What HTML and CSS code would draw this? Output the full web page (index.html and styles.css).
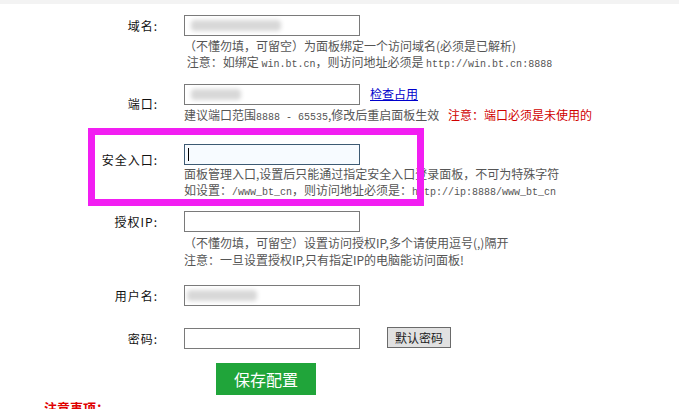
FILE: index.html
```html
<!DOCTYPE html>
<html lang="zh-CN">
<head>
<meta charset="utf-8">
<title>面板设置</title>
<link rel="stylesheet" href="styles.css">
</head>
<body>
<div class="topbar"></div>
<div class="form">
  <div class="row r1">
    <div class="label">域名:</div>
    <div class="field">
      <div class="line">
        <div class="input"><span class="blur b1"></span></div>
      </div>
      <div class="hint h1a">（不懂勿填，可留空）为面板绑定一个访问域名(必须是已解析)</div>
      <div class="hint">&nbsp;注意：如绑定 <span class="mono">win.bt.cn</span>，则访问地址必须是 <span class="mono">http://win.bt.cn:8888</span></div>
    </div>
  </div>

  <div class="row r2">
    <div class="label lb2">端口:</div>
    <div class="field">
      <div class="line">
        <div class="input"><span class="blur b2"></span></div>
        <a class="link" href="#">检查占用</a>
      </div>
      <div class="hint h2a">建议端口范围<span class="mono">8888 - 65535</span>,修改后重启面板生效 <span class="warn">注意：端口必须是未使用的</span></div>
    </div>
  </div>

  <div class="row r3">
    <div class="label lb3">安全入口:</div>
    <div class="field">
      <div class="line">
        <div class="input focus"><span class="caret"></span></div>
      </div>
      <div class="hint h3a">面板管理入口,设置后只能通过指定安全入口登录面板，不可为特殊字符</div>
      <div class="hint">如设置：<span class="mono">/www_bt_cn</span>，则访问地址必须是：<span class="mono">http://ip:8888/www_bt_cn</span></div>
    </div>
  </div>

  <div class="row r4">
    <div class="label">授权IP:</div>
    <div class="field">
      <div class="line">
        <div class="input"></div>
      </div>
      <div class="hint h4a">（不懂勿填，可留空）设置访问授权IP,多个请使用逗号(,)隔开</div>
      <div class="hint h4b">注意：一旦设置授权IP,只有指定IP的电脑能访问面板!</div>
    </div>
  </div>

  <div class="row r5">
    <div class="label">用户名:</div>
    <div class="field">
      <div class="line">
        <div class="input"><span class="blur b5"></span></div>
      </div>
    </div>
  </div>

  <div class="row r6">
    <div class="label">密码:</div>
    <div class="field">
      <div class="line">
        <div class="input"></div>
        <button class="btn-default" type="button">默认密码</button>
      </div>
    </div>
  </div>

  <div class="save-wrap">
    <button class="btn-save" type="button">保存配置</button>
  </div>

  <div class="notes">注意事项：</div>

  <div class="highlight"></div>
</div>
</body>
</html>
```
FILE: styles.css
```css
html, body {
  margin: 0;
  padding: 0;
  background: #fff;
  font-family: "Noto Sans CJK SC", "Liberation Sans", sans-serif;
  font-size: 12px;
  color: #333;
  overflow: hidden;
}

.topbar {
  height: 4px;
  background: #f3f3f3;
}

.form {
  position: relative;
  padding-top: 11px;
}

.row {
  display: flex;
  align-items: flex-start;
}

.r2 { margin-top: 14px; }
.r3 { margin-top: 21px; }
.r4 { margin-top: 13px; }
.r5 { margin-top: 17px; }
.r6 { margin-top: 22px; }

.label {
  width: 158px;
  text-align: right;
  line-height: 21px;
  height: 21px;
  font-size: 12px;
  color: #111;
  flex: none;
  letter-spacing: 1px;
}

.lb2 { margin-top: 9px; }
.lb3 { margin-top: 5px; }

.field {
  margin-left: 26px;
  display: flex;
  flex-direction: column;
}

.line {
  display: flex;
  align-items: center;
  height: 21px;
}

.input {
  position: relative;
  width: 176px;
  height: 21px;
  box-sizing: border-box;
  border: 1px solid #7a7a7a;
  background: #fff;
  overflow: hidden;
  flex: none;
}

.input.focus {
  border-color: #3d5a73;
  background: #f7fbff;
}

.caret {
  position: absolute;
  left: 3px;
  top: 3px;
  width: 1px;
  height: 13px;
  background: #000;
}

.blur {
  position: absolute;
  top: 4px;
  height: 11px;
  background: #d8d8d8;
  filter: blur(2px);
  border-radius: 4px;
}
.b1 { left: 6px; width: 90px; }
.b2 { left: 6px; width: 50px; }
.b5 { left: 2px; width: 70px; }

.link {
  margin-left: 10px;
  color: #0000cc;
  text-decoration: underline;
  font-size: 12px;
  line-height: 16px;
  margin-top: -1px;
}

.hint {
  height: 16px;
  line-height: 16px;
  color: #555;
  white-space: nowrap;
  overflow: visible;
}

.h1a { margin-top: 2px; }
.h2a { margin-top: 2px; }
.h3a { margin-top: 1px; }
.h4a { margin-top: 3px; }
.h4b { margin-top: 1px; }

.mono {
  font-family: "Liberation Mono", monospace;
  font-size: 10px;
  line-height: 10px;
}

.warn {
  color: #d00000;
  margin-left: 6px;
}

.btn-default {
  margin-left: 27px;
  width: 64px;
  height: 21px;
  margin-top: -2px;
  padding: 0;
  box-sizing: border-box;
  border: 1px solid #6a6a6a;
  background: #e1e1e1;
  font-family: "Noto Sans CJK SC", sans-serif;
  font-size: 12px;
  color: #222;
  line-height: 19px;
}

.save-wrap {
  margin-top: 14px;
  padding-left: 216px;
}

.btn-save {
  width: 100px;
  height: 32px;
  border: 0;
  padding: 0;
  background: #20a53a;
  color: #fff;
  font-family: "Noto Sans CJK SC", sans-serif;
  font-size: 16px;
  display: block;
}

.notes {
  margin-top: 5px;
  padding-left: 44px;
  color: #e00000;
  font-weight: bold;
  font-size: 13px;
  line-height: 16px;
}

.highlight {
  position: absolute;
  left: 88px;
  top: 124px;
  width: 336px;
  height: 78px;
  box-sizing: border-box;
  border: 7px solid #f21ef2;
  pointer-events: none;
}
```
